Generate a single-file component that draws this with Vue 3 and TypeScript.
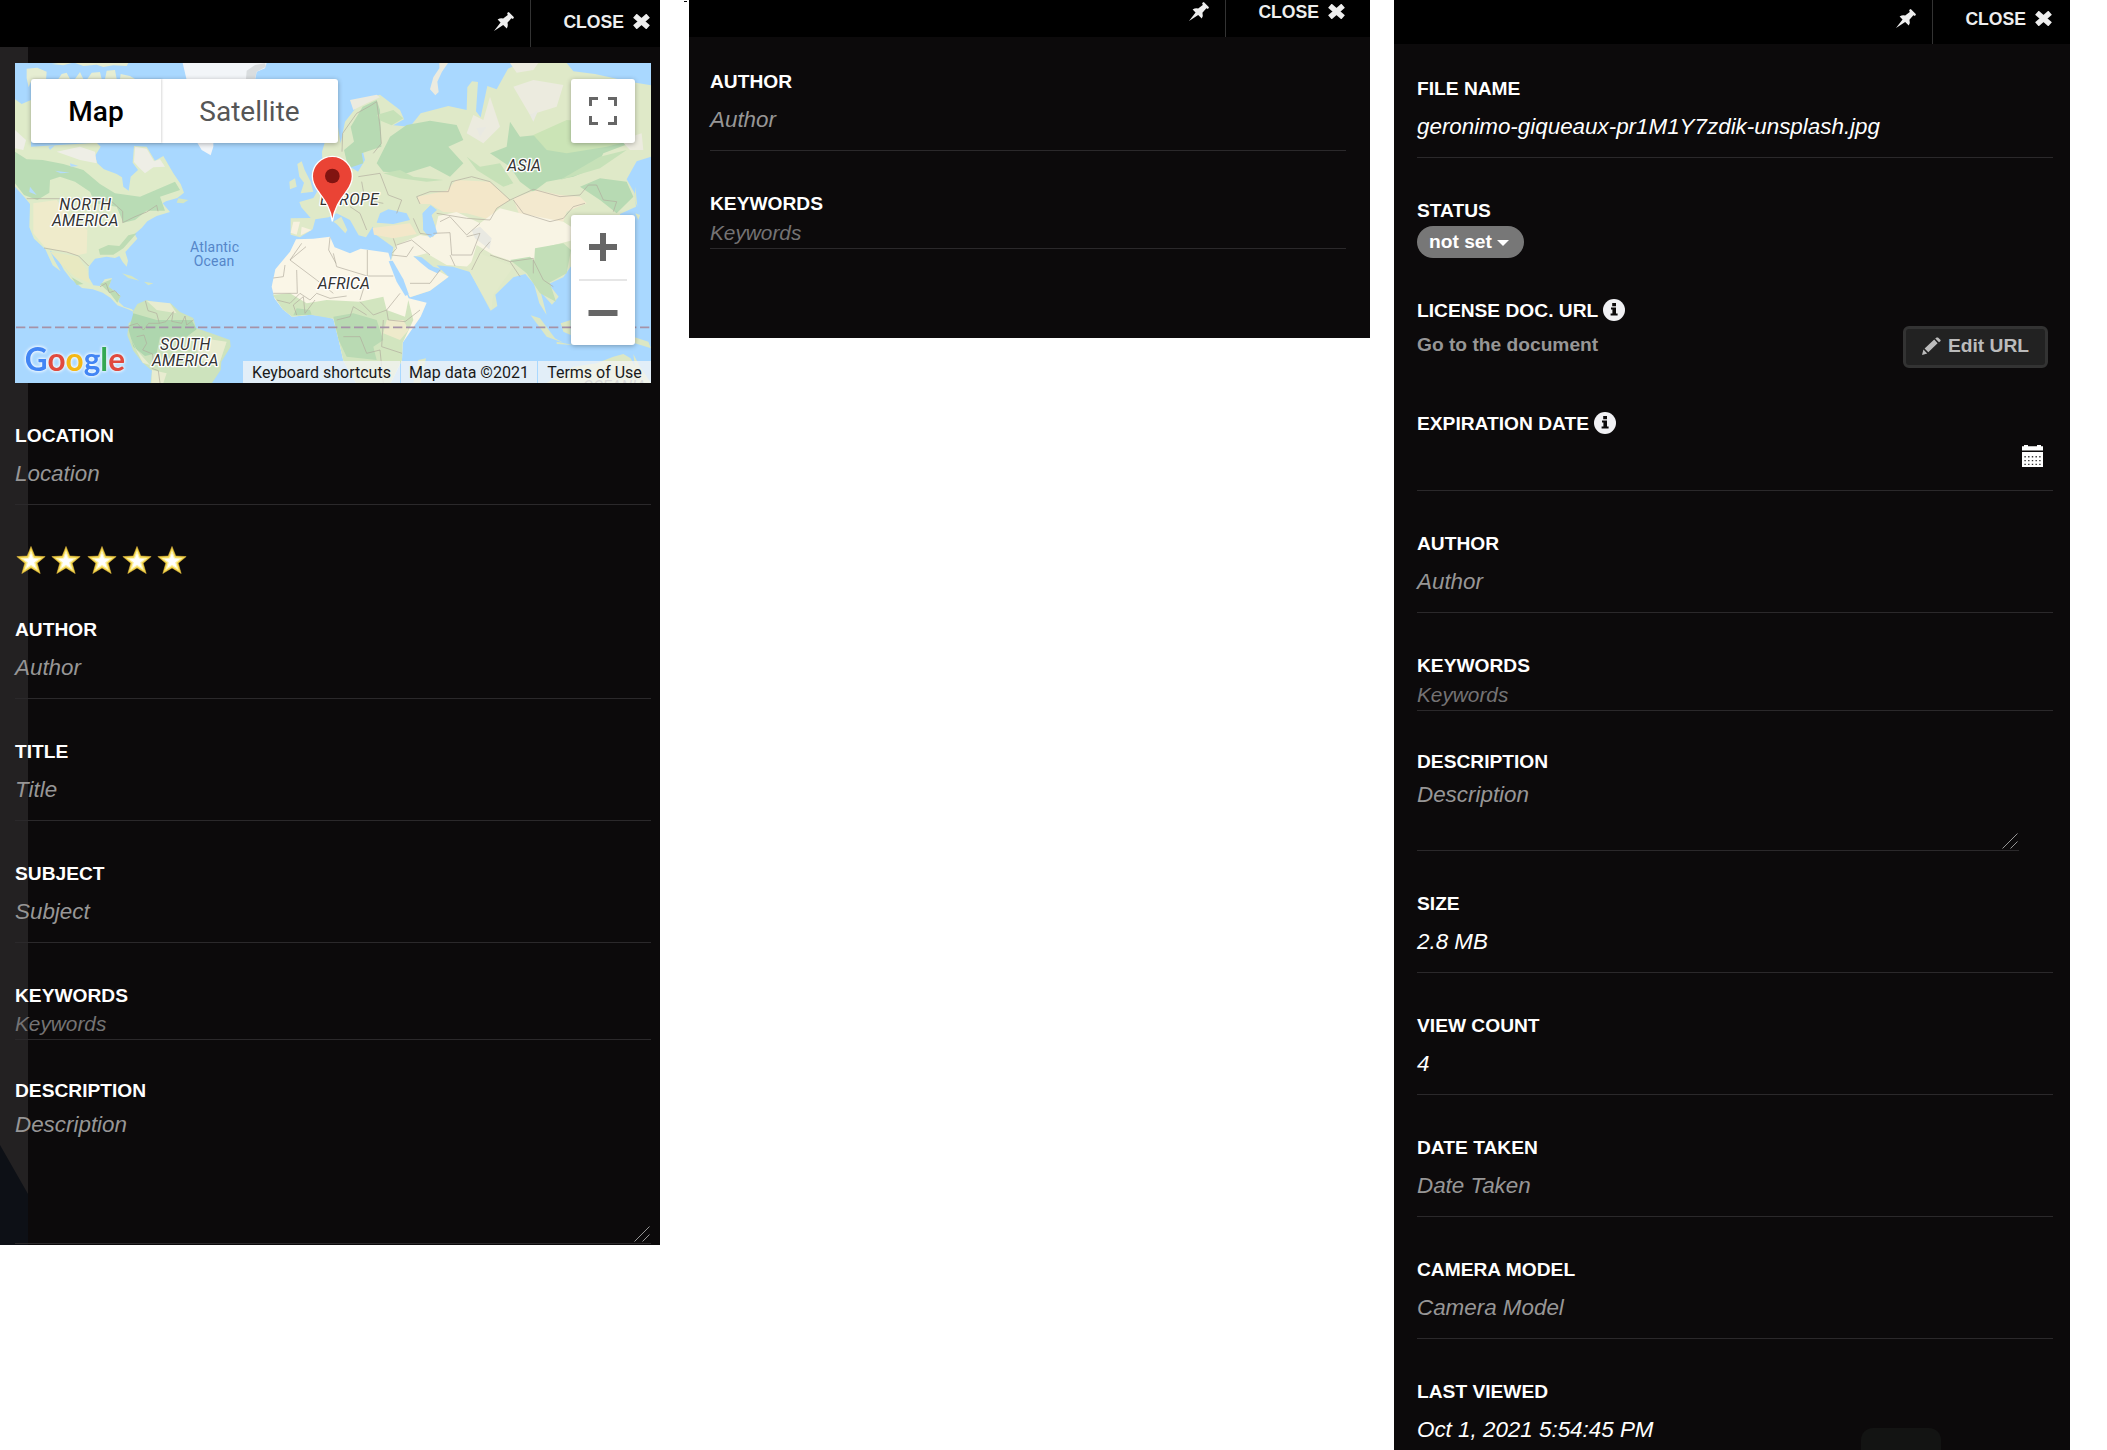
<script setup lang="ts">
interface Field {
  label: string
  value: string
  kind?: 'tags' | 'area' | 'short-area'
  filled?: boolean
}

const author: Field = { label: 'AUTHOR', value: 'Author' }
const keywords: Field = { label: 'KEYWORDS', value: 'Keywords', kind: 'tags' }

const leftFields: Field[] = [
  author,
  { label: 'TITLE', value: 'Title' },
  { label: 'SUBJECT', value: 'Subject' },
  keywords,
  { label: 'DESCRIPTION', value: 'Description', kind: 'area' },
]

const middleFields: Field[] = [author, keywords]

const rightFields: Field[] = [
  author,
  keywords,
  { label: 'DESCRIPTION', value: 'Description', kind: 'short-area' },
  { label: 'SIZE', value: '2.8 MB', filled: true },
  { label: 'VIEW COUNT', value: '4', filled: true },
  { label: 'DATE TAKEN', value: 'Date Taken' },
  { label: 'CAMERA MODEL', value: 'Camera Model' },
  { label: 'LAST VIEWED', value: 'Oct 1, 2021 5:54:45 PM', filled: true },
]

const panels = [
  { id: 'left', fields: leftFields },
  { id: 'middle', fields: middleFields },
  { id: 'right', fields: rightFields },
]
</script>

<template>
  <main class="board">
    <section v-for="panel in panels" :key="panel.id" class="panel" :class="panel.id">
      <header class="bar">
        <svg class="pin" viewBox="0 0 61 58">
          <path d="M0 58 20 32 11 23Q20 17 28 20L42 9 40 3 45 0 61 16 58 21 53 19 41 33Q44 42 39 50L28 40Z" />
        </svg>
        <div class="close">
          <span>CLOSE</span>
          <svg class="cross" viewBox="0 0 17 15"><path d="M1.9 1.7 15.1 13.3M15.1 1.7 1.9 13.3" /></svg>
        </div>
      </header>

      <svg v-if="panel.id === 'left'" class="strip" viewBox="0 0 28 1198">
        <rect width="28" height="1198" fill="#232122" />
        <path d="M0 1098 28 1147V1198H0Z" fill="#0d1016" />
      </svg>
      <i v-if="panel.id === 'middle'" class="speck"></i>

      <div class="content">
        <template v-if="panel.id === 'left'">
          <div class="map">
            <svg class="world" viewBox="45 189 1908 960">
              <rect x="45" y="189" width="1908" height="960" fill="#a9d8ff" />
              <!-- Arctic islands and Greenland -->
              <g fill="#e6edd2">
                <path d="M80 206 112 203 140 215 138 240H95L86 262 80 235ZM155 192 175 189H215L190 196ZM225 189H385L380 198 340 196 310 201 290 194 250 198ZM175 237 185 222 200 218 210 237ZM225 237 240 216 250 237ZM262 237 275 218 300 216 305 237ZM315 237 320 212 345 210 350 237ZM360 237 362 222 390 228 405 237Z" />
              </g>
              <path d="M548 189H800L795 205 770 215 765 240H640V440L632 466 605 450 590 425 560 240Z" fill="#f2f5f8" />
              <path d="M740 212 765 195 795 190 798 200 770 215 765 237H738Z" fill="#d9dddf" />
              <!-- North America -->
              <path d="M45 298 65 312 93 300V440L290 428 302 440 285 468 292 490 312 508 350 522 366 532 370 560 386 572 392 530 414 510 398 488 402 438 440 440 465 482 490 468 520 520 542 552 552 578 532 594 498 604 488 610 510 636 470 648 442 664 425 684 404 702 412 716 376 756 384 782 380 800 368 786 358 768 345 774 320 770 285 776 266 800 266 832 280 856 300 858 314 838 336 834 326 862 360 884 356 905 372 920 396 928 402 936 384 928 352 916 332 894 308 878 278 868 246 864 212 836 192 810 166 762 150 752 164 782 182 814 158 796 136 748 102 716 88 682 90 612 72 590 45 560Z" fill="#dfebc9" />
              <path d="M45 455 80 478 128 480 190 492 250 510 300 552 345 580 420 590 462 572 525 545 540 570 480 590 495 632 440 632 405 660 370 668 350 620 285 610 270 575 225 545 180 530 150 540 148 578 112 600 72 585 45 550Z" fill="#b9dcb5" />
              <path d="M45 390 78 420 70 450 45 445ZM405 440 440 446 462 484 480 478 495 500 460 502 435 520 418 504 402 486ZM170 455 240 440 285 455 290 490 240 480Z" fill="#eeeee6" />
              <path d="M100 610 170 600 210 650 262 690 260 760 232 766 135 742 100 700Z" fill="#efebcb" />
              <path d="M150 755 235 770 262 812 270 850 225 830 190 800Z" fill="#e8e9c1" />
              <path d="M296 748 325 735 358 738 385 706 410 700 370 745 340 764 300 764ZM300 852 335 838 326 860 362 888 352 908 330 880ZM190 795 215 832 250 852 230 855Z" fill="#bddcb4" />
              <path d="M535 595 565 600 550 610 530 608ZM366 820 395 828 418 842 385 834ZM432 845 460 850 445 856Z" fill="#d5e6c3" />
              <path d="M145 440 165 436 150 450ZM210 490 235 498 212 500ZM165 512 210 518 182 520ZM90 560 110 585 88 576Z" fill="#b4dcfb" />
              <path d="M80 596H178L330 600 368 634V668L405 650 440 636 470 616 474 634M132 744 200 756 236 768 266 798M300 860 318 850 328 878 345 872 358 888" class="line" />
              <!-- South America -->
              <path d="M398 936 412 912 440 900 486 914 512 910 540 936 580 954 588 984 640 1002 690 1020 692 1040 664 1085 662 1110 636 1149H452L456 1112 428 1088 400 1052 382 1006 386 970 402 956Z" fill="#cde3bd" />
              <path d="M400 940 470 960 575 960 590 988 560 1010 480 1010 470 1060 435 1068 400 1040 386 990Z" fill="#aed6ae" />
              <path d="M440 902 510 910 530 940 470 930ZM580 1010 680 1025 655 1100 600 1080ZM456 1110 500 1120 490 1149H454ZM384 1000 410 1050 450 1095 428 1088Z" fill="#e8ecd0" />
              <path d="M436 902 444 932 470 940 478 970 498 965 520 935 515 964 545 970 555 948 560 975 580 960M386 978 412 970 430 990 446 970 478 970M410 1010 432 1005 440 1030 428 1050 458 1062 460 1090M455 1105 475 1112 480 1149" class="line" />
              <!-- British Isles, western Europe and Asia -->
              <path d="M892 492 905 484 914 510 932 545 940 575 902 580 912 548 898 530ZM868 545 885 535 890 560 870 568ZM872 655 932 654 904 622 898 606 940 594 952 574 985 566 968 510 966 455 978 415 1014 380 1022 430 1035 365 1088 298 1140 284 1200 330 1212 358 1180 376 1230 380 1262 340 1345 318 1400 330 1402 262 1416 244 1434 246 1428 334 1442 352 1462 258 1490 268 1524 206 1560 189H1700L1720 214 1785 222 1890 245 1953 256V470L1910 484 1880 538 1904 580 1908 620 1860 642V700L1712 800 1690 832 1646 852 1676 890 1656 914 1622 876 1640 945 1618 910 1602 852 1576 822 1540 832 1486 884 1492 918 1472 932 1434 862 1410 816 1358 800 1310 796 1346 830 1290 872 1230 892 1204 838 1172 785 1180 742 1130 706 1118 680 1098 712 1076 706 1050 660 1010 640 986 652 946 658 938 688 900 712 872 704Z" fill="#dfe9c8" />
              <path d="M1110 372 1100 415 1085 440 1095 480 1074 515 1050 500 1052 450 1072 400 1095 380ZM1140 640 1165 628 1220 640 1230 660 1180 672 1130 668ZM1268 640 1292 616 1310 630 1294 645 1312 700 1290 714 1270 690Z" fill="#a9d8ff" />
              <!-- Boreal and far-east forest -->
              <path d="M1032 450 1062 425 1052 380 1088 320 1130 300 1140 330 1144 440 1085 460 1090 490 1045 505ZM1130 490 1170 410 1220 375 1290 362 1370 375 1390 420 1345 440 1390 490 1350 530 1290 498 1220 520 1150 515ZM1530 365 1560 410 1660 400 1750 390 1860 400 1890 430 1810 460 1790 500 1720 530 1640 545 1600 575 1560 545 1530 500 1470 460 1520 440ZM1740 560 1800 535 1880 545 1900 590 1850 640 1800 600Z" fill="#b7dab3" />
              <path d="M1600 405 1700 360 1830 370 1900 420 1820 440 1700 460 1640 450Z" fill="#cbe4b6" />
              <path d="M1130 345 1180 330 1210 355 1175 376 1142 362ZM1150 520 1200 510 1240 530 1330 540 1280 545 1200 535ZM1400 470 1440 500 1500 490 1540 550 1510 560 1430 510ZM1680 540 1800 470 1880 450 1800 505Z" fill="#c6e1b8" />
              <path d="M1400 400 1420 345 1450 360 1470 290 1500 380 1450 430ZM1540 260 1600 240 1690 255 1670 320 1590 345ZM1862 420 1925 400 1930 450 1890 450ZM1530 189H1615L1600 210 1550 218ZM1050 300 1130 284 1140 292 1100 310 1060 330Z" fill="#ecebdf" />
              <path d="M1290 268 1300 232 1318 205 1318 189H1344L1326 215 1312 245 1316 276 1306 286Z" fill="#ecebdf" />
              <!-- Steppe, deserts and plateaus -->
              <path d="M1252 590 1340 572 1368 540 1470 545 1530 600 1490 625 1472 660 1400 640 1330 636 1290 612 1260 612ZM1118 684 1230 670 1250 702 1180 715 1122 704Z" fill="#f3e7c9" />
              <path d="M1540 595 1610 570 1680 585 1740 590 1760 610 1700 635 1690 665 1560 650Z" fill="#f3e9cf" />
              <path d="M1315 648 1370 636 1440 670 1500 625 1560 640 1690 665 1713 680 1712 722 1640 740 1610 780 1540 785 1480 765 1430 735 1410 800 1340 795 1280 760 1240 770 1346 830 1290 872 1230 892 1172 785 1190 735 1260 705 1300 712Z" fill="#f8f4e4" />
              <path d="M1240 768 1265 772 1300 800 1326 808 1312 820 1286 808 1262 788ZM1268 640 1292 616 1310 630 1294 645 1312 700 1290 714 1270 690Z" fill="#a9d8ff" />
              <path d="M1605 745 1690 730 1713 750 1700 820 1645 850 1600 820ZM1530 780 1590 770 1620 800 1650 850 1668 905 1620 880 1580 820Z" fill="#c3dfb8" />
              <path d="M1400 800 1440 760 1540 800 1480 885 1474 930 1434 860Z" fill="#e2eaca" />
              <path d="M880 665 900 665 890 704 872 698ZM905 680 935 690 902 706Z" fill="#f7f1df" />
              <path d="M1415 690 1440 680 1475 715 1468 748 1425 715ZM1590 345 1615 330 1600 365ZM1430 385 1460 380 1440 410Z" fill="#e9e9e2" />
              <!-- Africa -->
              <path d="M888 718 940 716 990 710 1004 742 1050 760 1082 746 1165 758 1178 800 1206 850 1226 895 1280 908 1262 950 1208 1028 1206 1080 1172 1149H1068L1030 1082 1016 1020 1000 956 972 948 932 944 876 950 848 928 824 896 815 860 826 808 870 755Z" fill="#faf6e7" />
              <path d="M818 884 870 880 920 910 980 900 1080 905 1150 890 1160 930 1215 950 1225 900 1240 960 1208 1028 1206 1080 1172 1149H1068L1030 1082 1016 1020 1000 956 932 944 876 950 848 928Z" fill="#d2e5bf" />
              <path d="M1000 950 1060 940 1130 960 1150 1020 1120 1040 1130 1080 1040 1070 1016 1020ZM890 925 930 930 935 944 880 946Z" fill="#b9dab3" />
              <path d="M1160 960 1210 960 1226 990 1200 1020 1150 1000Z" fill="#eeeacb" />
              <path d="M1166 784 1178 782 1210 838 1226 882 1216 888 1190 845Z" fill="#a9d8ff" />
              <path d="M1000 665 1024 650 1042 690 1036 700 1010 672Z" fill="#dfe9c8" />
              <!-- Southeast Asia and Oceania -->
              <path d="M1592 946 1620 955 1665 1015 1690 1028 1640 1010ZM1682 970 1712 960V1005L1690 995ZM1670 1025 1720 1035 1670 1032ZM1900 1010 1945 1025 1953 1045 1905 1030ZM1906 640 1920 645 1915 660ZM1906 560 1912 620 1904 600ZM1640 1149 1690 1120 1720 1100 1790 1090 1840 1070 1870 1062 1892 1075 1905 1100 1900 1062 1920 1100 1953 1149ZM1255 1080 1278 1075 1262 1149H1240Z" fill="#dce7c4" />
              <!-- Country borders -->
              <path d="M905 730 870 780 950 840 1000 880M990 712 986 750 1008 790M820 834 850 830 855 795M918 740 870 780M890 810 892 880 820 880M1102 750V828H1180M1000 760 1010 800 1102 828M1102 830 1080 900M830 900 870 910 900 880 930 900 950 880 990 895 1040 888M890 945 880 915 910 890 915 940 945 900M1080 905 1120 945 1160 930 1200 880M1160 930 1165 960 1215 965 1260 930M1010 960 1050 950 1060 920 1100 945M1030 1010 1080 1010 1100 1060 1140 1050 1150 1149M1150 960 1145 1040 1206 1060M1180 715 1190 745 1176 760M1190 735 1235 720 1290 765M1175 765 1220 770 1240 740M1230 850 1290 850 1320 810" class="line" />
              <path d="M1026 455 1028 400 1070 340 1110 318 1130 305 1140 380 1144 430 1120 460M1075 530 1140 520 1165 585 1205 600 1190 640M1050 620 1080 640 1100 690M1085 545 1095 600 1150 610M1260 612 1250 590 1290 575 1345 575 1355 545 1415 530 1470 545 1530 600 1490 625 1470 660 1400 655 1310 640M1530 600 1600 568 1680 590 1740 585 1765 555H1790L1810 600 1850 605 1840 635M1540 600 1570 640 1650 665 1690 655 1720 620 1755 610M1320 665 1350 650 1400 705 1440 670M1300 700 1350 698 1355 765 1415 765 1440 700 1400 710M1350 765 1365 798M1415 810 1440 760 1470 725M1470 765 1530 785 1600 775 1600 820M1530 785 1560 830M1600 780 1630 840 1660 860M1240 655 1260 700 1295 705" class="line" />
              <path d="M48 982H1953" stroke="#a692a8" stroke-width="5.5" stroke-dasharray="28 11" fill="none" />
              <g class="place">
                <text x="178" y="630" textLength="155">NORTH</text>
                <text x="156" y="678" textLength="199">AMERICA</text>
                <text x="480" y="1050" textLength="151">SOUTH</text>
                <text x="456" y="1098" textLength="199">AMERICA</text>
                <text x="960" y="614" textLength="176">EUROPE</text>
                <text x="953" y="867" textLength="157">AFRICA</text>
                <text x="1522" y="512" textLength="101">ASIA</text>
                <text x="1748" y="1176" textLength="190" class="faint">OCEANIA</text>
              </g>
              <g class="sea">
                <text x="570" y="755" textLength="147">Atlantic</text>
                <text x="581" y="798" textLength="122">Ocean</text>
              </g>
              <text class="google" x="74" y="1112" textLength="301" lengthAdjust="spacingAndGlyphs"><tspan fill="#4285f4">G</tspan><tspan fill="#e04a3f">o</tspan><tspan fill="#f4b816">o</tspan><tspan fill="#4285f4">g</tspan><tspan fill="#34a853">l</tspan><tspan fill="#e04a3f">e</tspan></text>
              <path d="M997 664C990 618 972 598 953 572 940 554 937 544 937 529A60 60 0 0 1 1057 529C1057 544 1054 554 1041 572 1022 598 1004 618 997 664Z" fill="#ea4335" stroke="#fff" stroke-width="4" />
              <circle cx="997" cy="528" r="22" fill="#811411" />
            </svg>
            <div class="map-types">
              <button class="active">Map</button>
              <button>Satellite</button>
            </div>
            <button class="fullscreen">
              <svg viewBox="0 0 28 28"><path d="M1.5 9V1.5H9M19 1.5H26.5V9M26.5 19V26.5H19M9 26.5H1.5V19" /></svg>
            </button>
            <div class="zoom">
              <svg viewBox="0 0 64 130">
                <path d="M32 18V46M18 32H46M17.5 98H46.5" stroke="#666" stroke-width="6" />
                <path d="M8 65H56" stroke="#e6e6e6" stroke-width="2" />
              </svg>
            </div>
            <footer class="credits">
              <span class="c1">Keyboard shortcuts</span>
              <span class="c2">Map data ©2021</span>
              <span class="c3">Terms of Use</span>
            </footer>
          </div>

          <div class="field">
            <div class="label">LOCATION</div>
            <div class="value">Location</div>
          </div>
          <div class="stars">
            <svg v-for="n in 5" :key="n" viewBox="0 0 30 28">
              <path d="M15 .4 18.8 10 29.2 10.6 21.2 17.2 24.2 27.6 15 21.9 5.8 27.6 8.8 17.2 .8 10.6 11.2 10Z" fill="#f2d54a" stroke="#e0b53c" stroke-width=".5" />
              <path d="M15 5.6 17.4 12 24 12.5 18.8 16.6 20.8 23.2 15 19.4 9.2 23.2 11.2 16.6 6 12.5 12.6 12Z" fill="#fff" stroke="#fdf3b0" stroke-width="1.2" />
            </svg>
          </div>
        </template>

        <template v-if="panel.id === 'right'">
          <div class="field">
            <div class="label">FILE NAME</div>
            <div class="value filled">geronimo-giqueaux-pr1M1Y7zdik-unsplash.jpg</div>
          </div>
          <div class="status">
            <div class="label">STATUS</div>
            <button class="pill">not set<i class="caret"></i></button>
          </div>
          <div class="license">
            <div class="label">
              LICENSE DOC. URL
              <svg class="info" viewBox="0 0 22 22"><circle cx="11" cy="11" r="11" /><path d="M9.2 4H13V7.2H9.2ZM8 8.6H13V14.6H14.6V16.6H7.6V14.6H9.4V10.6H8Z" /></svg>
            </div>
            <div class="license-row">
              <span>Go to the document</span>
              <button class="edit">
                <svg viewBox="0 0 19 18"><path d="M0 18 1.4 12.6 5.2 16.5ZM2.6 11.4 12.2 2.6 15.6 6.2 6.3 15.2ZM13.2 1.6 14.6 .4H16L18.6 3V4L17 5.3Z" /></svg>
                Edit URL
              </button>
            </div>
          </div>
          <div class="field">
            <div class="label">
              EXPIRATION DATE
              <svg class="info" viewBox="0 0 22 22"><circle cx="11" cy="11" r="11" /><path d="M9.2 4H13V7.2H9.2ZM8 8.6H13V14.6H14.6V16.6H7.6V14.6H9.4V10.6H8Z" /></svg>
            </div>
            <div class="date">
              <svg viewBox="0 0 21 22">
                <path d="M0 1.3H2V0H6V1.3H15V0H19V1.3H21V5.6H0ZM0 7H21V22H0Z" fill="#fff" />
                <path d="M2.4 11.8H19M2.4 15.6H19M2.4 19.4H19" stroke="#333" stroke-width="1.4" stroke-dasharray="1.4 2.3" />
              </svg>
            </div>
          </div>
        </template>

        <div v-for="field in panel.fields" :key="field.label" class="field" :class="field.kind">
          <div class="label">{{ field.label }}</div>
          <div class="value" :class="{ filled: field.filled }">{{ field.value }}</div>
          <svg v-if="field.kind === 'area' || field.kind === 'short-area'" class="grip" viewBox="0 0 16 16">
            <path d="M.5 15.5 15.5 .5M8.5 15.5 15.5 8.5" />
          </svg>
        </div>
      </div>
      <i v-if="panel.id === 'right'" class="toast"></i>
    </section>
  </main>
</template>

<style>
body {
  margin: 0;
  background: #fff;
}
</style>

<style scoped>
.board {
  display: flex;
  align-items: flex-start;
  width: 2107px;
  height: 1450px;
  overflow: hidden;
  font-family: "Liberation Sans", Arial, sans-serif;
}
button {
  border: 0;
  padding: 0;
  margin: 0;
  font: inherit;
}
.panel {
  position: relative;
  flex: none;
  box-sizing: border-box;
  background: #0c0a0b;
  overflow: hidden;
}
.left { width: 660px; height: 1245px; }
.middle { width: 681px; height: 338px; margin-left: 29px; overflow: visible; }
.right { width: 676px; height: 1450px; margin-left: 24px; }

.bar {
  display: flex;
  justify-content: flex-end;
  align-items: flex-end;
  background: #000;
  color: #eee;
}
.left .bar { height: 47px; padding-right: 10px; }
.middle .bar { height: 37px; padding-right: 25px; }
.right .bar { height: 44px; padding-right: 18px; }
.pin {
  width: 20px;
  height: 19px;
  margin: 0 16px 16px 0;
  fill: #eee;
}
.close {
  display: flex;
  align-items: flex-end;
  justify-content: flex-end;
  box-sizing: border-box;
  width: 120px;
  height: 100%;
  border-left: 1px solid #333;
  font-size: 17.6px;
  font-weight: bold;
}
.close span { line-height: 20px; margin-bottom: 15px; }
.cross {
  width: 17px;
  height: 15px;
  margin: 0 0 18px 9px;
  stroke: #eee;
  stroke-width: 5.4;
}
.strip {
  position: absolute;
  left: 0;
  top: 47px;
  width: 28px;
  height: 1198px;
}
.speck {
  position: absolute;
  left: -5px;
  top: 1px;
  width: 3px;
  height: 1px;
  background: #000;
}
.content { position: relative; width: 636px; }
.left .content { padding: 16px 0 0 15px; }
.middle .content { padding: 34px 0 0 21px; }
.right .content { padding: 34px 0 0 23px; }

.field {
  position: relative;
  box-sizing: border-box;
  height: 80px;
  margin-bottom: 42px;
  border-bottom: 1px solid #2b292b;
}
.label {
  height: 24px;
  line-height: 22px;
  font-size: 19.2px;
  font-weight: bold;
  color: #fff;
  white-space: nowrap;
}
.value {
  line-height: 49px;
  font-size: 22.4px;
  font-style: italic;
  color: #979696;
  white-space: nowrap;
}
.value.filled { color: #fff; }
.tags { height: 56px; margin-bottom: 40px; }
.tags .value { font-size: 20.8px; line-height: 31px; color: #747374; }
.left .tags { height: 55px; }
.left .tags .value { line-height: 29px; }
.area { height: 164px; }
.short-area { height: 100px; width: 602px; }
.area .value { line-height: 41px; }
.short-area .value { line-height: 39px; }
.grip {
  position: absolute;
  right: 1px;
  bottom: 1px;
  width: 16px;
  height: 16px;
  fill: none;
  stroke: #a5a5a5;
  stroke-width: .9;
}

.stars {
  display: flex;
  gap: 5.3px;
  height: 28px;
  margin: -1px 0 45px 1px;
}
.stars svg { width: 30px; height: 28px; }

.status { margin-bottom: 41px; }
.pill {
  display: flex;
  align-items: center;
  box-sizing: border-box;
  width: 107px;
  height: 32px;
  margin-top: 2px;
  padding: 0 0 1px 12px;
  border-radius: 16px;
  background: #777;
  color: #fff;
  font-size: 19.2px;
  font-weight: bold;
}
.caret {
  margin: 3px 0 0 5px;
  border: 6.5px solid transparent;
  border-top-color: #fff;
  border-bottom: 0;
}
.info { width: 22px; height: 22px; vertical-align: -4px; fill: #f1f1f4; }
.info path { fill: #0c0a0b; }
.license { height: 113px; }
.license-row {
  display: flex;
  justify-content: space-between;
  padding: 3px 5px 0 0;
  font-size: 19.2px;
  font-weight: bold;
  color: #979696;
}
.license-row span { line-height: 38px; }
.edit {
  display: flex;
  align-items: center;
  box-sizing: border-box;
  width: 145px;
  height: 42px;
  padding: 0 0 2px 16px;
  border: 3px solid #333;
  border-radius: 6px;
  background: #222;
  color: #bbb;
}
.edit svg { width: 19px; height: 18px; margin-right: 7px; fill: #bbb; }
.date { display: flex; justify-content: flex-end; padding: 9px 10px 0 0; }
.date svg { width: 21px; height: 22px; }
.license + .field { height: 79px; }
.toast {
  position: absolute;
  left: 467px;
  top: 1428px;
  width: 80px;
  height: 40px;
  border-radius: 12px;
  background: #131413;
}

.map {
  position: relative;
  width: 636px;
  height: 320px;
  margin-bottom: 42px;
  overflow: hidden;
  font-family: Roboto, sans-serif;
}
.world { display: block; width: 636px; height: 320px; }
.line { fill: none; stroke: #b0ab9d; stroke-width: 2; }
.place {
  font: italic 400 47px Roboto, sans-serif;
  fill: #333;
  stroke: #fff;
  stroke-width: 8px;
  stroke-linejoin: round;
  paint-order: stroke;
}
.place .faint { fill: #8a8a8a; stroke: none; }
.sea { font: 42px Roboto, sans-serif; fill: #5586c9; }
.google {
  font: bold 98px Lato, sans-serif;
  filter: drop-shadow(0 0 5px #fff) drop-shadow(0 0 4px rgba(255, 255, 255, .7));
}
.map-types {
  position: absolute;
  left: 16px;
  top: 16px;
  display: flex;
  width: 307px;
  height: 64px;
  border-radius: 3px;
  background: #fff;
  box-shadow: 0 1px 5px rgba(0, 0, 0, .3);
}
.map-types button {
  flex: 1;
  background: none;
  font-size: 28px;
  color: #565656;
}
.map-types .active {
  flex: 0 0 130px;
  font-weight: 500;
  color: #000;
  box-shadow: 1px 0 2px rgba(0, 0, 0, .15);
}
.fullscreen,
.zoom {
  position: absolute;
  right: 16px;
  width: 64px;
  border-radius: 3px;
  background: #fff;
  box-shadow: 0 1px 5px rgba(0, 0, 0, .3);
}
.fullscreen {
  top: 16px;
  height: 64px;
  display: grid;
  place-items: center;
}
.fullscreen svg { width: 28px; height: 28px; fill: none; stroke: #666; stroke-width: 3; }
.zoom { top: 152px; height: 130px; }
.zoom svg { display: block; width: 64px; height: 130px; }
.credits {
  position: absolute;
  right: 0;
  bottom: 0;
  display: flex;
  gap: 1px;
  height: 22px;
  font-size: 16px;
  line-height: 24px;
  color: #1a1a1a;
  text-align: center;
  white-space: nowrap;
}
.credits span { height: 22px; background: rgba(245, 245, 245, .74); }
.c1 { width: 157px; }
.c2 { width: 136px; }
.c3 { width: 113px; }
</style>
